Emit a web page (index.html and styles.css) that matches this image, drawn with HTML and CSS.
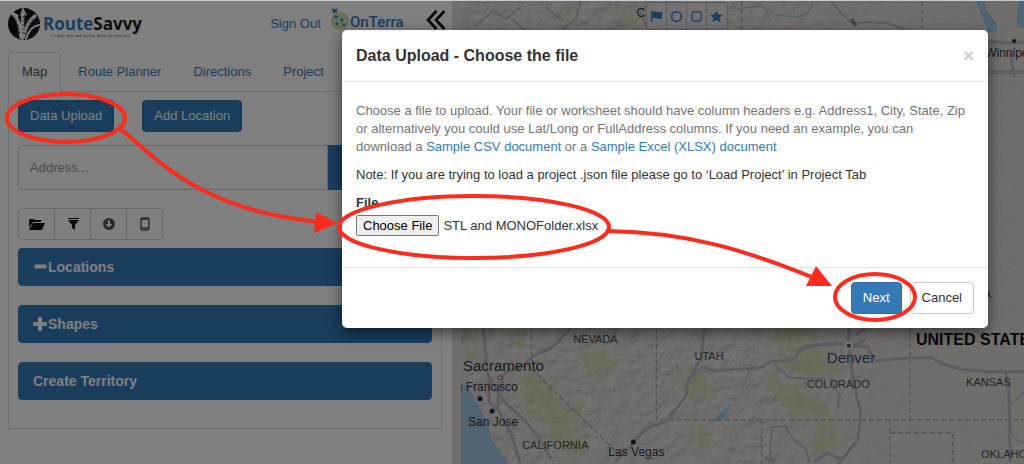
FILE: index.html
```
<!DOCTYPE html>
<html lang="en">
<head>
<meta charset="utf-8">
<title>RouteSavvy</title>
<meta name="viewport" content="width=device-width, initial-scale=1">
<link rel="stylesheet" href="styles.css">
</head>
<body>
<div class="app">
  <aside class="sidebar">
    <header class="header">
      <svg class="brand" viewBox="0 0 134 34" role="img" aria-label="RouteSavvy">
        <circle cx="16" cy="16" r="16" fill="#111"/>
        <g fill="none" stroke="#fff" stroke-linecap="round">
          <path d="M5 6c6 5 7 13 8 23M15 5c-1 8 0 16-1 25M27 8c-7 5-10 13-12 22" stroke-width="3.4"/>
          <path d="M10 8l-6-4M13 7l2-6 3 6" stroke-width="1.6"/>
          <path d="M31 17c-7 1-11 7-13 14" stroke-width="2"/>
        </g>
        <path d="M6 9c4 5 5 11 6 19M15 8v20M25 11c-5 4-8 10-9 17" fill="none" stroke="#555" stroke-dasharray="2 2"/>
        <text class="brand-name" x="35" y="22"><tspan fill="#337ab7">Route</tspan><tspan fill="#1a1a1a">Savvy</tspan></text>
        <text class="brand-tag" x="43" y="29">It's your time and money. Make the most of it.</text>
      </svg>
      <div class="header-links">
        <a href="#">Sign Out</a>
        <svg class="onterra" viewBox="0 0 76 24" role="img" aria-label="OnTerra">
          <circle cx="10" cy="13" r="9" fill="#c5d99b"/>
          <path d="M1 13h18M10 4c-6 5-6 13 0 18M10 4c6 5 6 13 0 18M3 8c5 2 9 2 14 0M3 18c5-2 9-2 14 0" fill="none" stroke="#e9efd5"/>
          <path d="M2 1l5 3M3 5l4-4" stroke="#337ab7" stroke-width="2"/>
          <g fill="#337ab7"><circle cx="6" cy="9" r="1.5"/><circle cx="12" cy="12" r="1.5"/><circle cx="7" cy="16" r="1.3"/><circle cx="14" cy="17" r="1.3"/></g>
          <text class="onterra-name" x="20" y="19">OnTerra</text>
        </svg>
        <button class="collapse" aria-label="Collapse panel">
          <svg viewBox="0 0 20 20"><path d="M10.500 1L2 10l8.500 9M18.500 1L10 10l8.500 9" fill="none" stroke="#000" stroke-width="2.600"/></svg>
        </button>
      </div>
    </header>
    <nav class="tabs">
      <a class="tab active" href="#">Map</a>
      <a class="tab" href="#">Route Planner</a>
      <a class="tab" href="#">Directions</a>
      <a class="tab" href="#">Project</a>
    </nav>
    <section class="pane">
      <div class="actions">
        <button class="btn primary">Data Upload</button>
        <button class="btn primary">Add Location</button>
      </div>
      <div class="search">
        <input type="text" placeholder="Address..." aria-label="Address">
        <button class="search-btn" aria-label="Search"></button>
      </div>
      <div class="tools">
        <button aria-label="Open"><svg viewBox="0 0 18 14"><path d="M1 11V3l1-1h4l1 1h6v2H5z" fill="#111"/><path d="M5 6h12l-3 7H1z" fill="#111"/></svg></button>
        <button aria-label="Filter"><svg viewBox="0 0 18 14"><path d="M4 1h11v1H4zM4 3h11l-4 5v5l-3-2V8z" fill="#111"/></svg></button>
        <button aria-label="Download"><svg viewBox="0 0 18 14"><circle cx="9" cy="7" r="6" fill="#555"/><path d="M8 3.500h2V7h2.500L9 10.500 5.500 7H8z" fill="#fff"/></svg></button>
        <button aria-label="Mobile"><svg viewBox="0 0 18 14"><rect x="5" y="1" width="8" height="12" rx="1.500" fill="none" stroke="#555" stroke-width="1.400"/><path d="M5 2h8M5 11h8" stroke="#555" stroke-width="1.500"/></svg></button>
      </div>
      <button class="bar"><svg class="minus" viewBox="0 0 14 14"><path d="M1.500 6.500h12" stroke="#fff" stroke-width="4"/></svg>Locations</button>
      <button class="bar"><svg viewBox="0 0 14 14"><path d="M0 7h14M7 0v14" stroke="#fff" stroke-width="4"/></svg>Shapes</button>
      <button class="bar">Create Territory</button>
    </section>
  </aside>
  <main class="map">
    <svg class="map-art" viewBox="461 2 563 462" preserveAspectRatio="xMinYMin slice" aria-label="Map">
      <defs>
        <filter id="relief" x="0" y="0" width="100%" height="100%">
          <feTurbulence type="fractalNoise" baseFrequency=".06 .08" numOctaves="4" seed="8" result="n"/>
          <feDiffuseLighting in="n" surfaceScale="4" lighting-color="#f4f0f4"><feDistantLight azimuth="225" elevation="55"/></feDiffuseLighting>
        </filter>
        <filter id="rough" x="-20%" y="-20%" width="140%" height="140%">
          <feTurbulence type="fractalNoise" baseFrequency=".12" numOctaves="4" seed="3"/>
          <feDisplacementMap in="SourceGraphic" scale="40" xChannelSelector="R" yChannelSelector="G"/>
          <feGaussianBlur stdDeviation="1"/>
        </filter>
        <linearGradient id="fade" x1="0" x2="1"><stop offset=".55" stop-color="#fff"/><stop offset=".8" stop-color="#222"/></linearGradient>
        <mask id="west"><rect x="461" y="0" width="563" height="464" fill="url(#fade)"/></mask>
      </defs>
      <rect x="461" y="0" width="563" height="464" fill="#e0ddd7"/>
      <g mask="url(#west)"><rect x="461" y="0" width="563" height="464" filter="url(#relief)" opacity=".35"/></g>
      <g fill="#c3d49c" opacity=".6" filter="url(#rough)">
        <path d="M519 374l22 2 22 22 14 20 2 30-14 10-12-26-22-22zM585 355l22-3 4 22-16 12zM461 336l14-5 3 22-10 8zM505 329l22 1-2 12-16-3zM680 378l22-8 12 18-22 14zM775 354l40-7 24 20-24 14-32-10zM765 375l20 10 30 10 10 28-32-8-20-14zM815 410l20 8-8 40-14-4zM690 430l20-5 3 16-18 4zM757 330l60 3 8 6-40 6zM745 397l10 2-6 6zM560 12l10 4-4 12-10-4zM620 5l15 12-6 9-14-10z"/>
      </g>
      <g fill="#a5c6e4">
        <path d="M461 382l8 6 9 16 10 19 3 15 12 17 9 13h-51z"/>
        <path d="M975 2h8l2 8 11 15-1 8h-8l-7-18zM1018 2h6v28l-8-3v-14zM674 364l4 1-1 7zM713 419l9-7 8-9-4 14-13 5z"/>
      </g>
      <path d="M735 10l25-3 16 9 20 2 11-4 6-12M741 390l8-20 4-12M1010 404l14-12M1009 415l1 16 6 10 8 2" fill="none" stroke="#abc4d6" stroke-width="1.500"/>
      <g fill="none" stroke="#a09a9e" stroke-width="1.200" stroke-dasharray="5 3">
        <path d="M531 328v24l3 20 54 52 34 34M656 328v92h368M761 420v44M909 328v92M889 420v44M889 433h63v31M741 2v28M921 2v28"/>
      </g>
      <path d="M987 72h37M987 74h37" stroke="#aaa" stroke-width="1"/>
      <g fill="none" stroke="#bfb4c1" stroke-linejoin="round">
        <path d="M483 325l2 22 3 29 16 26 20 18 13 15 14 24M500 379l8-8 14-4 13-12 18-8 18-19M503 379l-5 17 0 14 14 26 8 28M489 376v26l8 8M633 442l12-13 21-8 19-24 2-14 14-26 3-31M690 376l12-9 12 4 46-3 10-6 24-2 6-11 16-4 20-1 16 2 12-5M848 325v22l4 30 3 16 5 20-3 27-20 24M850 346l16 1 9 14 34-3h22l10 6 22 6 25 2h30l30-3M1004 370l4 22 1 70M764 458l10 4M813 462l14-9 12 6M855 335l10-7 15-3M615 462l18-19M987 42l20 2 17-1M1009 54l4 24" stroke-width="3"/>
        <path d="M769 460l2-33 14-1 6 12 14 11 4 13M829 378l10 18-2 12M773 364l16 14 35 1M830 2l10 12 12 11 14-2 20 1 18 6M545 8l18 14M475 28l18-16 13 8 15-12M510 40l14-10-12-10M580 2l-4 18-16 12M650 2l-10 12 8 18M670 2l24 10 8 20" stroke-width="2"/>
      </g>
      <path d="M851 20l4 7" stroke="#888" stroke-width="3" fill="none"/>
      <g class="city">
        <circle cx="480" cy="399" r="2.500"/><circle cx="492" cy="411" r="2.500"/><circle cx="633" cy="442" r="2.500"/><circle cx="1013" cy="42" r="2"/>
      </g>
      <circle cx="500" cy="378" r="2" fill="#fff" stroke="#885a5a"/>
      <circle cx="848" cy="346" r="3" fill="#555" stroke="#fff" stroke-width="1.500"/>
      <g class="label-region">
        <text x="573" y="343">NEVADA</text><text x="694" y="360">UTAH</text><text x="522" y="449">CALIFORNIA</text>
        <text x="806" y="388">COLORADO</text><text x="965" y="386">KANSAS</text><text x="980" y="458">OKLAHOMA</text><text x="930" y="298">NEBRASKA</text>
      </g>
      <g class="label-city">
        <text class="large" x="463" y="371">Sacramento</text><text x="449" y="391">an Francisco</text><text x="468" y="426">San Jose</text>
        <text x="608" y="456">Las Vegas</text><text class="large navy" x="826" y="363">Denver</text><text x="636" y="18">Calgary</text><text x="984" y="58">Winnipeg</text>
      </g>
      <text class="label-country" x="915" y="345">UNITED STATES</text>
    </svg>
    <div class="draw-tools">
      <button aria-label="Pin"><svg viewBox="0 0 14 14"><path d="M1 1h1.500v12H1zM3 2c4-2 5 2 10 0v7c-5 2-6-2-10 0z" fill="#337ab7"/></svg></button>
      <button aria-label="Circle"><svg viewBox="0 0 14 14"><circle cx="7" cy="7" r="5.200" fill="none" stroke="#337ab7" stroke-width="1.700"/></svg></button>
      <button aria-label="Square"><svg viewBox="0 0 14 14"><rect x="2" y="2" width="10" height="10" rx="2" fill="none" stroke="#337ab7" stroke-width="1.200"/></svg></button>
      <button aria-label="Star"><svg viewBox="0 0 14 14"><path d="M7 .5l2 4.300 4.800.5-3.500 3.200 1 4.800L7 10.900l-4.300 2.400 1-4.800L.2 5.300 5 4.800z" fill="#337ab7"/></svg></button>
    </div>
  </main>
  <div class="backdrop"></div>
  <form class="modal" role="dialog" aria-labelledby="modal-title">
    <header class="modal-header">
      <h1 id="modal-title">Data Upload - Choose the file</h1>
      <button type="button" class="close" aria-label="Close">×</button>
    </header>
    <div class="modal-body">
      <p class="hint">Choose a file to upload. Your file or worksheet should have column headers e.g. Address1, City, State, Zip or alternatively you could use Lat/Long or FullAddress columns. If you need an example, you can download a <a href="#">Sample CSV document</a> or a <a href="#">Sample Excel (XLSX) document</a></p>
      <p>Note: If you are trying to load a project .json file please go to ‘Load Project’ in Project Tab</p>
      <label for="file">File</label>
      <input type="file" id="file">
    </div>
    <footer class="modal-footer">
      <button type="button" class="btn primary">Next</button>
      <button type="button" class="btn">Cancel</button>
    </footer>
  </form>
  <svg class="annotations" viewBox="0 0 1024 464" preserveAspectRatio="xMinYMin meet" aria-hidden="true">
    <g fill="none" stroke="#fb2c1d" stroke-width="4">
      <ellipse cx="66" cy="118" rx="59" ry="24"/>
      <path d="M121 129C165 168 210 212 320 222"/>
      <ellipse cx="474" cy="227" rx="135" ry="31"/>
      <path d="M608 231C690 232 750 252 814 278"/>
      <ellipse cx="875" cy="297" rx="40" ry="23"/>
    </g>
    <path d="M338 223l-24 10 2-21zM832 286l-16-20-10 20z" fill="#fb2c1d"/>
  </svg>
</div>
<script src="app.js"></script>
</body>
</html>
```
FILE: styles.css
```
* { box-sizing: border-box; }
body {
  margin: 0;
  font: 13px/18px "Liberation Sans", Arial, sans-serif;
  color: #333;
  background: #fff;
}
button, input { font: inherit; color: inherit; }
button { cursor: pointer; }
a { color: #337ab7; text-decoration: none; }
svg { display: block; }

.app {
  position: relative;
  display: flex;
  min-height: 100vh;
  overflow: hidden;
  border-top: 1px solid #c4ccd2;
}

.sidebar {
  flex: 0 0 45%;
  padding: 0 10px 0 8px;
  border-right: 9px solid #dedede;
}
.header {
  display: flex;
  justify-content: space-between;
  height: 51px;
  padding: 7px 4px 0 0;
}
.brand { width: 134px; height: 34px; }
.brand-name { font: 700 17px "Open Sans", sans-serif; }
.brand-tag { font: 4px "Liberation Sans", sans-serif; fill: #666; }
.header-links { display: flex; align-items: flex-start; }
.header-links a { padding-top: 7px; margin-right: 9px; }
.onterra { width: 76px; height: 24px; margin-right: 20px; }
.onterra-name { font: 500 15px Roboto, sans-serif; fill: #337ab7; }
.collapse { padding: 0; border: 0; background: none; margin: 2px -8px 0 0; }
.collapse svg { width: 20px; height: 20px; }

.tabs { display: flex; gap: 2px; border-bottom: 1px solid #ddd; }
.tab {
  padding: 10px 14px;
  margin-bottom: -1px;
  border: 1px solid transparent;
  border-radius: 4px 4px 0 0;
}
.tab.active { padding: 10px 13px; background: #fff; border-color: #ddd #ddd #fff; color: #555; }

.pane {
  display: flex;
  flex-direction: column;
  padding: 8px 9px 28px;
  border: 1px solid #ddd;
  border-top: 0;
}
.actions { display: flex; gap: 28px; }
.btn {
  padding: 6px 11px;
  border: 1px solid #ccc;
  border-radius: 4px;
  background: #fff;
}
.btn.primary { background: #337ab7; border-color: #2e6da4; color: #fff; }
.search { display: flex; margin: 13px 0 18px; }
.search input {
  flex: 1;
  min-width: 0;
  height: 45px;
  padding: 0 11px;
  border: 1px solid #ccc;
  border-radius: 4px 0 0 4px;
}
.search input::placeholder { color: #999; }
.search-btn { width: 104px; border: 0; border-radius: 0 4px 4px 0; background: #337ab7; }
.tools { display: flex; margin-bottom: 8px; }
.tools button {
  width: 37px;
  height: 32px;
  margin-right: -1px;
  padding: 0 9px;
  border: 1px solid #ccc;
  background: #fff;
}
.tools button:first-child { border-radius: 4px 0 0 4px; }
.tools button:last-child { border-radius: 0 4px 4px 0; }
.tools svg { width: 18px; height: 14px; }
.bar {
  display: flex;
  align-items: center;
  height: 38px;
  padding: 0 14px;
  border: 1px solid #337ab7;
  border-radius: 4px;
  background: #337ab7;
  color: #fff;
  font-size: 14px;
  font-weight: 700;
}
.bar + .bar { margin-top: 19px; }
.bar svg { width: 14px; height: 14px; margin-right: 1px; }

.map { position: relative; flex: 1; min-width: 0; }
.map-art { position: absolute; width: 100%; height: 100%; }
.label-region { font-size: 11px; fill: #484848; }
.label-city { font-size: 12px; fill: #303038; }
.label-city .large { font-size: 15px; }
.label-city .navy { fill: #334d70; }
.label-country { font-size: 16px; font-weight: 700; fill: #111; }
.city { fill: #1c2c40; }
.draw-tools {
  position: absolute;
  top: 1px;
  left: 185px;
  display: flex;
  border: 1px solid #bbb;
  border-radius: 4px;
  background: #e4e4e4;
}
.draw-tools button { width: 20px; height: 26px; padding: 0 3px; border: 0; border-right: 1px solid #bbb; background: none; }
.draw-tools button:last-child { border-right: 0; }
.draw-tools svg { width: 13px; height: 13px; }

.backdrop { position: absolute; inset: 0; background: rgba(0, 0, 0, .5); }
.modal {
  position: absolute;
  top: 29px;
  left: 342px;
  right: 36px;
  border-radius: 5px;
  background: #fff;
  box-shadow: 0 4px 14px rgba(0, 0, 0, .55);
}
.modal-header {
  display: flex;
  align-items: center;
  justify-content: space-between;
  padding: 14px;
  border-bottom: 1px solid #e5e5e5;
}
.modal-header h1 { margin: 0; font-size: 16px; line-height: 23px; }
.close { padding: 0; border: 0; background: none; color: #ccc; font-size: 19px; font-weight: 700; }
.modal-body { padding: 20px 20px 30px 14px; }
.modal-body p { margin: 0 0 10px; }
.modal-body .hint { color: #737373; }
.modal-body label { display: block; margin-bottom: 3px; font-weight: 700; }
.modal-body input {
  display: block;
  width: 100%;
  height: 22px;
}
.modal-body input::file-selector-button {
  height: 21px;
  margin: 0 4px 0 0;
  padding: 0 6px;
  border: 1px solid #767676;
  border-radius: 2px;
  background: #efefef;
  color: #000;
  font: inherit;
}
.modal-footer {
  display: flex;
  justify-content: flex-end;
  gap: 8px;
  padding: 14px;
  border-top: 1px solid #e5e5e5;
}
.annotations { position: absolute; top: -1px; left: 0; width: 1024px; pointer-events: none; }
```
FILE: app.js
```
const selection = new DataTransfer();
selection.items.add(new File([""], "STL and MONOFolder.xlsx"));
document.getElementById("file").files = selection.files;
```
